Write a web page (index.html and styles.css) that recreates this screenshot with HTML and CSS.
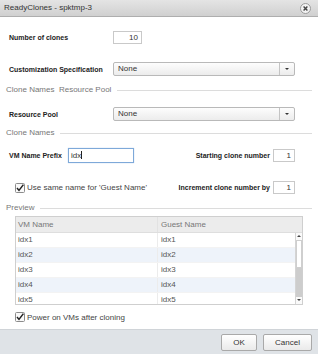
FILE: index.html
```html
<!DOCTYPE html>
<html lang="en">
<head>
    <meta charset="UTF-8">
    <meta name="viewport" content="width=device-width, initial-scale=1.0">
    <title>ReadyClones - spktmp-3</title>
    <link rel="stylesheet" href="styles.css">
</head>
<body>
    <div class="dialog">
        <div class="titlebar">
            <span class="title">ReadyClones - spktmp-3</span>
            <svg class="close" width="11" height="11" viewBox="0 0 11 11">
                <circle cx="5.5" cy="5.5" r="5" fill="#f2f2f2" stroke="#9a9a9a"/>
                <path d="M3.6 3.6 L7.4 7.4 M7.4 3.6 L3.6 7.4" stroke="#444" stroke-width="1.4"/>
            </svg>
        </div>

        <div class="content">
            <div class="row row-clones">
                <label class="label">Number of clones</label>
                <div class="field num">10</div>
            </div>

            <div class="row row-spec">
                <label class="label">Customization Specification</label>
                <div class="select">
                    <span class="select-text">None</span>
                    <span class="select-arrow"></span>
                </div>
            </div>

            <div class="section sec-pool">
                <span>Clone Names&nbsp;&nbsp;Resource Pool</span>
                <i class="rule"></i>
            </div>

            <div class="row row-pool">
                <label class="label">Resource Pool</label>
                <div class="select">
                    <span class="select-text">None</span>
                    <span class="select-arrow"></span>
                </div>
            </div>

            <div class="section sec-names">
                <span>Clone Names</span>
                <i class="rule"></i>
            </div>

            <div class="row row-prefix">
                <div class="pair">
                    <label class="label short">VM Name Prefix</label>
                    <div class="field prefix">idx<i class="caret"></i></div>
                </div>
                <div class="pair">
                    <label class="label">Starting clone number</label>
                    <div class="field small">1</div>
                </div>
            </div>

            <div class="row row-same">
                <div class="check">
                    <svg class="box" width="10" height="10" viewBox="0 0 10 10">
                        <rect x="0.5" y="0.5" width="9" height="9" rx="1" fill="#fafafa" stroke="#8c8c8c"/>
                        <path d="M2 5 L4 7.4 L8.4 1.6" fill="none" stroke="#222" stroke-width="1.5"/>
                    </svg>
                    <span>Use same name for 'Guest Name'</span>
                </div>
                <div class="pair">
                    <label class="label">Increment clone number by</label>
                    <div class="field small">1</div>
                </div>
            </div>

            <div class="section sec-preview">
                <span>Preview</span>
                <i class="rule"></i>
            </div>

            <div class="preview">
                <div class="preview-head">
                    <span>VM Name</span>
                    <span>Guest Name</span>
                </div>
                <div class="preview-body">
                    <div class="rows">
                        <div class="prow"><span>idx1</span><span>idx1</span></div>
                        <div class="prow alt"><span>idx2</span><span>idx2</span></div>
                        <div class="prow"><span>idx3</span><span>idx3</span></div>
                        <div class="prow alt"><span>idx4</span><span>idx4</span></div>
                        <div class="prow"><span>idx5</span><span>idx5</span></div>
                    </div>
                    <div class="scrollbar">
                        <div class="sb-btn"><i class="up"></i></div>
                        <div class="sb-thumb"></div>
                        <div class="sb-track"></div>
                        <div class="sb-btn"><i class="down"></i></div>
                    </div>
                </div>
            </div>

            <div class="check power">
                <svg class="box" width="10" height="10" viewBox="0 0 10 10">
                    <rect x="0.5" y="0.5" width="9" height="9" rx="1" fill="#fafafa" stroke="#8c8c8c"/>
                    <path d="M2 5 L4 7.4 L8.4 1.6" fill="none" stroke="#222" stroke-width="1.5"/>
                </svg>
                <span>Power on VMs after cloning</span>
            </div>
        </div>

        <div class="footer">
            <button class="btn ok">OK</button>
            <button class="btn cancel">Cancel</button>
        </div>
    </div>
</body>
</html>
```

FILE: styles.css
```css
body {
    margin: 0;
    font-family: 'Liberation Sans', Arial, sans-serif;
    font-size: 8px;
    color: #333;
    background: #fff;
}
.dialog {
    width: 318px;
    height: 354px;
    display: flex;
    flex-direction: column;
    overflow: hidden;
}
.titlebar {
    height: 16px;
    display: flex;
    align-items: center;
    justify-content: space-between;
    padding: 0 7px 0 4px;
    background: linear-gradient(#e4e4e4, #d0d0d0);
    border-bottom: 1px solid #aeaeae;
    flex-shrink: 0;
}
.title {
    color: #333;
    line-height: 16px;
}
.content {
    flex: 1;
    padding: 0 6px;
    display: flex;
    flex-direction: column;
}
.row {
    display: flex;
    align-items: center;
    padding: 0 17px 0 3px;
}
.label {
    font-size: 7px;
    font-weight: bold;
    color: #222;
    width: 104px;
    flex-shrink: 0;
}
.pair .label {
    width: auto;
    margin-right: 3px;
}
.pair .label.short {
    width: 59px;
    margin-right: 0;
}
.pair {
    display: flex;
    align-items: center;
}
.field {
    box-sizing: border-box;
    height: 13px;
    border: 1px solid #c9c9c9;
    background: #fff;
    line-height: 11px;
    padding: 0 3px;
    color: #333;
}
.num {
    width: 29px;
    text-align: right;
}
.small {
    width: 22px;
    text-align: right;
}
.prefix {
    width: 66px;
    height: 15px;
    line-height: 13px;
    border-color: #7ea9d9;
    box-shadow: 0 0 1px #a9c8ea;
    padding-left: 2px;
}
.caret {
    display: inline-block;
    width: 1px;
    height: 8px;
    background: #222;
    vertical-align: -1px;
}
.select {
    flex: 1;
    box-sizing: border-box;
    height: 14px;
    display: flex;
    border: 1px solid #b9b9b9;
    border-radius: 2px;
    background: linear-gradient(#fdfdfd, #ececec);
}
.select-text {
    flex: 1;
    padding-left: 4px;
    line-height: 12px;
    color: #333;
}
.select-arrow {
    width: 14px;
    border-left: 1px solid #c4c4c4;
    position: relative;
}
.select-arrow::after {
    content: '';
    position: absolute;
    left: 5px;
    top: 5px;
    border-left: 2px solid transparent;
    border-right: 2px solid transparent;
    border-top: 2px solid #333;
}
.section {
    display: flex;
    align-items: center;
    gap: 6px;
    color: #777;
    height: 10px;
    line-height: 10px;
}
.rule {
    flex: 1;
    border-top: 1px solid #dcdcdc;
}
.row-clones { margin-top: 14px; height: 13px; }
.row-spec { margin-top: 18px; height: 14px; }
.sec-pool { margin-top: 9px; }
.row-pool { margin-top: 12px; height: 14px; }
.sec-names { margin-top: 7px; }
.row-prefix { margin-top: 10px; height: 15px; justify-content: space-between; }
.row-same {
    margin-top: 18px;
    height: 13px;
    justify-content: space-between;
    padding-left: 9px;
}
.sec-preview { margin-top: 9px; }
.check {
    display: flex;
    align-items: center;
    gap: 2px;
    color: #444;
}
.box {
    display: block;
}
.preview {
    margin: 3px 9px 0 9px;
    height: 89px;
    box-sizing: border-box;
    border: 1px solid #cfcfcf;
    display: flex;
    flex-direction: column;
}
.preview-head {
    height: 15px;
    display: grid;
    grid-template-columns: 141px 1fr;
    background: #ececec;
    border-bottom: 1px solid #dedede;
    color: #777;
    line-height: 15px;
}
.preview-head span {
    padding-left: 2px;
}
.preview-head span + span {
    border-left: 1px solid #e2e2e2;
    padding-left: 3px;
}
.preview-body {
    flex: 1;
    display: flex;
    overflow: hidden;
}
.rows {
    flex: 1;
    overflow: hidden;
}
.prow {
    height: 15px;
    line-height: 14px;
    display: grid;
    grid-template-columns: 141px 1fr;
    color: #555;
    border-bottom: 1px solid #f3f3f3;
    box-sizing: border-box;
}
.prow span {
    padding-left: 2px;
}
.prow span + span {
    border-left: 1px solid #ececec;
    padding-left: 3px;
}
.prow.alt {
    background: #eef3fa;
}
.scrollbar {
    width: 6px;
    display: flex;
    flex-direction: column;
    border-left: 1px solid #d4d4d4;
}
.sb-btn {
    height: 7px;
    background: #fafafa;
    position: relative;
}
.sb-btn i {
    position: absolute;
    left: 1px;
    top: 2px;
    border-left: 2px solid transparent;
    border-right: 2px solid transparent;
}
.sb-btn .up { border-bottom: 2px solid #444; }
.sb-btn .down { border-top: 2px solid #444; }
.sb-thumb {
    height: 28px;
    box-sizing: border-box;
    border: 1px solid #cfcfcf;
    background: #fff;
}
.sb-track {
    flex: 1;
    background: #cdcdcd;
}
.power {
    margin-top: 7px;
    padding-left: 9px;
    height: 10px;
}
.footer {
    height: 25px;
    flex-shrink: 0;
    background: #dfe3e7;
    border-top: 1px solid #d0d4d8;
    box-sizing: border-box;
    display: flex;
    align-items: center;
    justify-content: flex-end;
    gap: 6px;
    padding: 0 6px 0 0;
}
.btn {
    height: 17px;
    padding: 0;
    font-family: 'Liberation Sans', Arial, sans-serif;
    font-size: 8px;
    color: #333;
    background: linear-gradient(#ffffff, #eaeaea);
    border: 1px solid #a9a9a9;
    border-radius: 2px;
}
.ok { width: 36px; }
.cancel { width: 49px; }
```
